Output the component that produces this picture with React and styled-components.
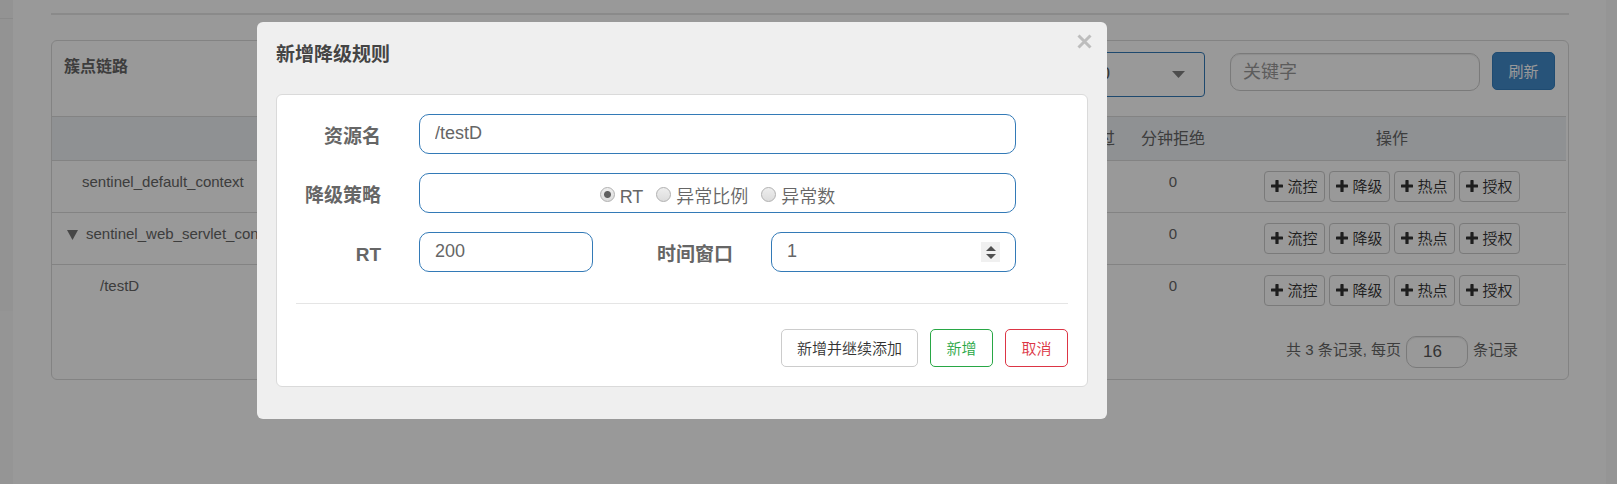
import React, { useState } from "react";
import styled, { createGlobalStyle } from "styled-components";

const GlobalStyle = createGlobalStyle`
  *, *::before, *::after { box-sizing: border-box; }
  body {
    margin: 0;
    background: #fff;
    color: #666;
    font: 15px/20px "Liberation Sans", "Noto Sans CJK SC", sans-serif;
  }
  button, input, select { font-family: inherit; margin: 0; }
`;

const Page = styled.div`
  display: flex;
  min-height: 100vh;
`;

const Sidebar = styled.aside`
  flex: 0 0 13px;
  background: #f8f8f8;
`;

const SidebarItem = styled.div`
  height: ${(p) => p.$height}px;
  background: #f6f6f6;
  border-bottom: 1px solid ${(p) => (p.$line ? "#e7e7e7" : "#f6f6f6")};
`;

const Gutter = styled.div`
  flex: 0 0 11px;
  background: #f8f8f8;
`;

const Content = styled.main`
  flex: 1;
  min-width: 0;
  padding: 13px 37px 24px 38px;
`;

const Rule = styled.hr`
  margin: 0 0 25px;
  border: 0;
  border-top: 2px solid #e6e6e6;
`;

const Panel = styled.section`
  padding-right: 2px;
  border: 1px solid #dadada;
  border-radius: 6px;
`;

const Toolbar = styled.header`
  display: flex;
  align-items: flex-start;
  min-height: 75px;
  padding: 11px 11px 0 12px;
`;

const PanelTitle = styled.h2`
  flex: 1;
  margin: 5px 0 0;
  font-size: 16px;
  line-height: 20px;
  font-weight: 600;
`;

const SelectWrap = styled.div`
  position: relative;
  width: 280px;
  margin-right: 25px;
`;

const MachineSelect = styled.select`
  appearance: none;
  display: block;
  width: 100%;
  height: 45px;
  padding: 0 94px 2px 16px;
  border: 1px solid #337ab7;
  border-radius: 4px;
  background: #fff;
  color: #555;
  font-size: 16px;
  text-align-last: right;
`;

const SelectCaret = styled.svg`
  position: absolute;
  right: 20px;
  top: 19px;
  pointer-events: none;
`;

const SearchInput = styled.input`
  width: 250px;
  height: 38px;
  margin: 1px 12px 0 0;
  padding: 0 12px;
  border: 1px solid #ccc;
  border-radius: 10px;
  box-shadow: inset 0 1px 1px rgba(0, 0, 0, 0.08);
  background: #fff;
  color: #555;
  font-size: 18px;
  &::placeholder { color: #999; }
`;

const RefreshButton = styled.button`
  width: 63px;
  height: 38px;
  padding: 0 0 2px;
  border: 1px solid #357ebd;
  border-radius: 5px;
  background: #428bca;
  color: #fff;
  font-size: 15px;
`;

const Table = styled.table`
  width: 100%;
  table-layout: fixed;
  border-collapse: collapse;
`;

const Col = styled.col`
  width: ${(p) => p.$width};
`;

const HeadCell = styled.th`
  height: 44px;
  padding: 0;
  border-top: 1px solid #dadada;
  background: #eff2f6;
  font-size: 16px;
  font-weight: 400;
`;

const Cell = styled.td`
  height: 52px;
  padding: 11px 0 0;
  border-top: 1px solid #dadada;
  text-align: center;
  vertical-align: top;
`;

const NameCell = styled(Cell)`
  padding-left: ${(p) => p.$indent}px;
  text-align: left;
  white-space: nowrap;
`;

const ActionCell = styled(Cell)`
  padding-top: 10px;
`;

const Toggle = styled.svg`
  margin-right: 8px;
  vertical-align: -1px;
`;

const Actions = styled.div`
  display: flex;
  justify-content: center;
  gap: 4px;
`;

const ActionButton = styled.button`
  display: flex;
  align-items: center;
  justify-content: center;
  gap: 4px;
  width: 61px;
  height: 31px;
  padding: 0 0 2px;
  border: 1px solid #ccc;
  border-radius: 4px;
  background: #fff;
  color: #333;
  font-size: 15px;
  font-weight: 350;
  white-space: nowrap;
`;

const Pager = styled.footer`
  display: flex;
  align-items: center;
  justify-content: flex-end;
  gap: 5px;
  padding: 19px 48px 11px;
`;

const PagerText = styled.label`
  padding-bottom: 3px;
`;

const PageSize = styled.input`
  width: 62px;
  height: 32px;
  padding: 0 16px;
  border: 1px solid #ccc;
  border-radius: 10px;
  box-shadow: inset 0 1px 1px rgba(0, 0, 0, 0.08);
  background: #fff;
  color: #555;
  font-size: 17px;
`;

const Overlay = styled.div`
  position: fixed;
  inset: 0;
  overflow: auto;
  padding: 22px 20px 22px 257px;
  background: rgba(0, 0, 0, 0.4);
`;

const Dialog = styled.div`
  position: relative;
  max-width: 850px;
  padding: 20px 19px 32px;
  border-radius: 6px;
  background: #efefef;
`;

const DialogTitle = styled.h1`
  margin: 0 0 26px;
  color: #444;
  font-size: 19px;
  line-height: 26px;
  font-weight: 700;
`;

const CloseButton = styled.button`
  position: absolute;
  top: 12px;
  right: 15px;
  display: flex;
  padding: 0;
  border: 0;
  background: none;
  color: #bdbdbd;
`;

const Card = styled.form`
  padding: 19px;
  border: 1px solid #dadada;
  border-radius: 6px;
  background: #fff;
`;

const Fields = styled.div`
  display: grid;
  grid-template-columns: 85px minmax(80px, 174px) 102px minmax(120px, 245px);
  column-gap: 38px;
  row-gap: 19px;
`;

const Label = styled.label`
  padding-top: 6px;
  font-size: 19px;
  line-height: 34px;
  font-weight: 700;
  text-align: right;
  white-space: nowrap;
`;

const TextInput = styled.input`
  grid-column: ${(p) => (p.$wide ? "2 / 5" : "auto")};
  width: 100%;
  height: 40px;
  padding: 0 15px 1px;
  border: 1px solid #337ab7;
  border-radius: 10px;
  background: #fff;
  color: #666;
  font-size: 18px;
`;

const NumberField = styled.div`
  display: flex;
  align-items: center;
  height: 40px;
  padding: 0 15px;
  border: 1px solid #337ab7;
  border-radius: 10px;
`;

const NumberInput = styled.input`
  appearance: textfield;
  flex: 1;
  min-width: 0;
  height: 38px;
  padding: 0 0 1px;
  border: 0;
  outline: 0;
  background: none;
  color: #666;
  font-size: 18px;
  &::-webkit-inner-spin-button { display: none; }
`;

const Spinner = styled.div`
  display: flex;
  flex-direction: column;
  width: 19px;
  background: #f0f0f0;
`;

const SpinButton = styled.button`
  display: flex;
  justify-content: center;
  height: 10px;
  padding: ${(p) => (p.$up ? "4px 0 0" : "2px 0 0")};
  border: 0;
  background: none;
  color: #505050;
`;

const RadioGroup = styled.div`
  grid-column: 2 / 5;
  display: flex;
  justify-content: center;
  align-items: center;
  gap: 13px;
  height: 40px;
  padding-top: 8px;
  border: 1px solid #337ab7;
  border-radius: 10px;
`;

const RadioLabel = styled.label`
  display: flex;
  align-items: center;
  gap: 5px;
  font-size: 18px;
  line-height: 26px;
  font-weight: 350;
`;

const Radio = styled.input`
  appearance: none;
  flex: none;
  width: 15px;
  height: 15px;
  margin-bottom: 5px;
  border: 1px solid #b0b0b0;
  border-radius: 50%;
  background: linear-gradient(#eee, #dcdcdc);
  &:checked {
    background: radial-gradient(circle, #606060 0 3px, transparent 4px), linear-gradient(#eee, #dcdcdc);
  }
`;

const Divider = styled.hr`
  margin: 31px 0 25px;
  border: 0;
  border-top: 1px solid #e5e5e5;
`;

const Footer = styled.div`
  display: flex;
  justify-content: flex-end;
  gap: 12px;
`;

const tones = {
  plain: { text: "#333", line: "#ccc" },
  success: { text: "#28a745", line: "#28a745" },
  danger: { text: "#dc3545", line: "#dc3545" },
};

const FormButton = styled.button`
  min-width: 63px;
  height: 38px;
  padding: 0 15px 2px;
  border: 1px solid ${(p) => tones[p.$tone].line};
  border-radius: 5px;
  background: #fff;
  color: ${(p) => tones[p.$tone].text};
  font-size: 15px;
  font-weight: 350;
  white-space: nowrap;
`;

const Triangle = ({ up }) => (
  <svg width="10" height="5" viewBox="0 0 10 5" aria-hidden="true">
    <path d={up ? "M0 5L5 0L10 5Z" : "M0 0L5 5L10 0Z"} fill="currentColor" />
  </svg>
);

const PlusIcon = () => (
  <svg width="12" height="12" viewBox="0 0 12 12" aria-hidden="true">
    <path
      d="M5 0h2q.6 0 .6.6V4.4H11.4q.6 0 .6.6V7q0 .6-.6.6H7.6V11.4q0 .6-.6.6H5q-.6 0-.6-.6V7.6H.6Q0 7.6 0 7V5q0-.6.6-.6H4.4V.6Q4.4 0 5 0Z"
      fill="currentColor"
    />
  </svg>
);

const resources = [
  { name: "sentinel_default_context", indent: 30 },
  { name: "sentinel_web_servlet_context", indent: 15, open: true },
  { name: "/testD", indent: 48 },
];
const actions = ["流控", "降级", "热点", "授权"];
const strategies = ["RT", "异常比例", "异常数"];

function ResourceTable() {
  return (
    <Table>
      <colgroup>
        <Col $width="auto" />
        <Col $width="90px" />
        <Col $width="90px" />
        <Col $width="348px" />
      </colgroup>
      <thead>
        <tr>
          <HeadCell />
          <HeadCell>分钟通过</HeadCell>
          <HeadCell>分钟拒绝</HeadCell>
          <HeadCell>操作</HeadCell>
        </tr>
      </thead>
      <tbody>
        {resources.map((r) => (
          <tr key={r.name}>
            <NameCell $indent={r.indent}>
              {r.open && (
                <Toggle width="11" height="10" viewBox="0 0 11 10" aria-hidden="true">
                  <path d="M0 0H11L5.5 10Z" fill="#777" />
                </Toggle>
              )}
              {r.name}
            </NameCell>
            <Cell />
            <Cell>0</Cell>
            <ActionCell>
              <Actions>
                {actions.map((a) => (
                  <ActionButton key={a} type="button">
                    <PlusIcon />
                    {a}
                  </ActionButton>
                ))}
              </Actions>
            </ActionCell>
          </tr>
        ))}
      </tbody>
    </Table>
  );
}

function RuleDialog() {
  const [strategy, setStrategy] = useState("RT");
  const [seconds, setSeconds] = useState(1);
  return (
    <Overlay>
      <Dialog role="dialog" aria-modal="true" aria-labelledby="dialog-title">
        <CloseButton type="button" aria-label="关闭">
          <svg width="15" height="15" viewBox="0 0 15 15" aria-hidden="true">
            <path d="M1.5 1.5L13.5 13.5M13.5 1.5L1.5 13.5" stroke="currentColor" strokeWidth="3" fill="none" />
          </svg>
        </CloseButton>
        <DialogTitle id="dialog-title">新增降级规则</DialogTitle>
        <Card>
          <Fields>
            <Label htmlFor="resource">资源名</Label>
            <TextInput id="resource" $wide defaultValue="/testD" />
            <Label as="span" id="strategy-label">降级策略</Label>
            <RadioGroup role="radiogroup" aria-labelledby="strategy-label">
              {strategies.map((s) => (
                <RadioLabel key={s}>
                  <Radio
                    type="radio"
                    name="strategy"
                    checked={strategy === s}
                    onChange={() => setStrategy(s)}
                  />
                  {s}
                </RadioLabel>
              ))}
            </RadioGroup>
            <Label htmlFor="rt">RT</Label>
            <TextInput id="rt" defaultValue="200" />
            <Label htmlFor="window">时间窗口</Label>
            <NumberField>
              <NumberInput
                id="window"
                type="number"
                value={seconds}
                onChange={(e) => setSeconds(Number(e.target.value))}
              />
              <Spinner>
                <SpinButton type="button" $up aria-label="增加" onClick={() => setSeconds(seconds + 1)}>
                  <Triangle up />
                </SpinButton>
                <SpinButton type="button" aria-label="减少" onClick={() => setSeconds(seconds - 1)}>
                  <Triangle />
                </SpinButton>
              </Spinner>
            </NumberField>
          </Fields>
          <Divider />
          <Footer>
            <FormButton type="button" $tone="plain">新增并继续添加</FormButton>
            <FormButton type="button" $tone="success">新增</FormButton>
            <FormButton type="button" $tone="danger">取消</FormButton>
          </Footer>
        </Card>
      </Dialog>
    </Overlay>
  );
}

export default function App() {
  return (
    <>
      <GlobalStyle />
      <Page>
        <Sidebar>
          <SidebarItem $height={19} $line />
          <SidebarItem $height={292} />
        </Sidebar>
        <Content>
          <Rule />
          <Panel>
            <Toolbar>
              <PanelTitle>簇点链路</PanelTitle>
              <SelectWrap>
                <MachineSelect aria-label="机器">
                  <option>8720</option>
                </MachineSelect>
                <SelectCaret width="13" height="7" viewBox="0 0 13 7" aria-hidden="true">
                  <path d="M0 0H13L6.5 7Z" fill="#808080" />
                </SelectCaret>
              </SelectWrap>
              <SearchInput placeholder="关键字" aria-label="关键字" />
              <RefreshButton type="button">刷新</RefreshButton>
            </Toolbar>
            <ResourceTable />
            <Pager>
              <PagerText htmlFor="page-size">共 3 条记录, 每页</PagerText>
              <PageSize id="page-size" defaultValue="16" />
              <PagerText as="span">条记录</PagerText>
            </Pager>
          </Panel>
        </Content>
        <Gutter />
      </Page>
      <RuleDialog />
    </>
  );
}
